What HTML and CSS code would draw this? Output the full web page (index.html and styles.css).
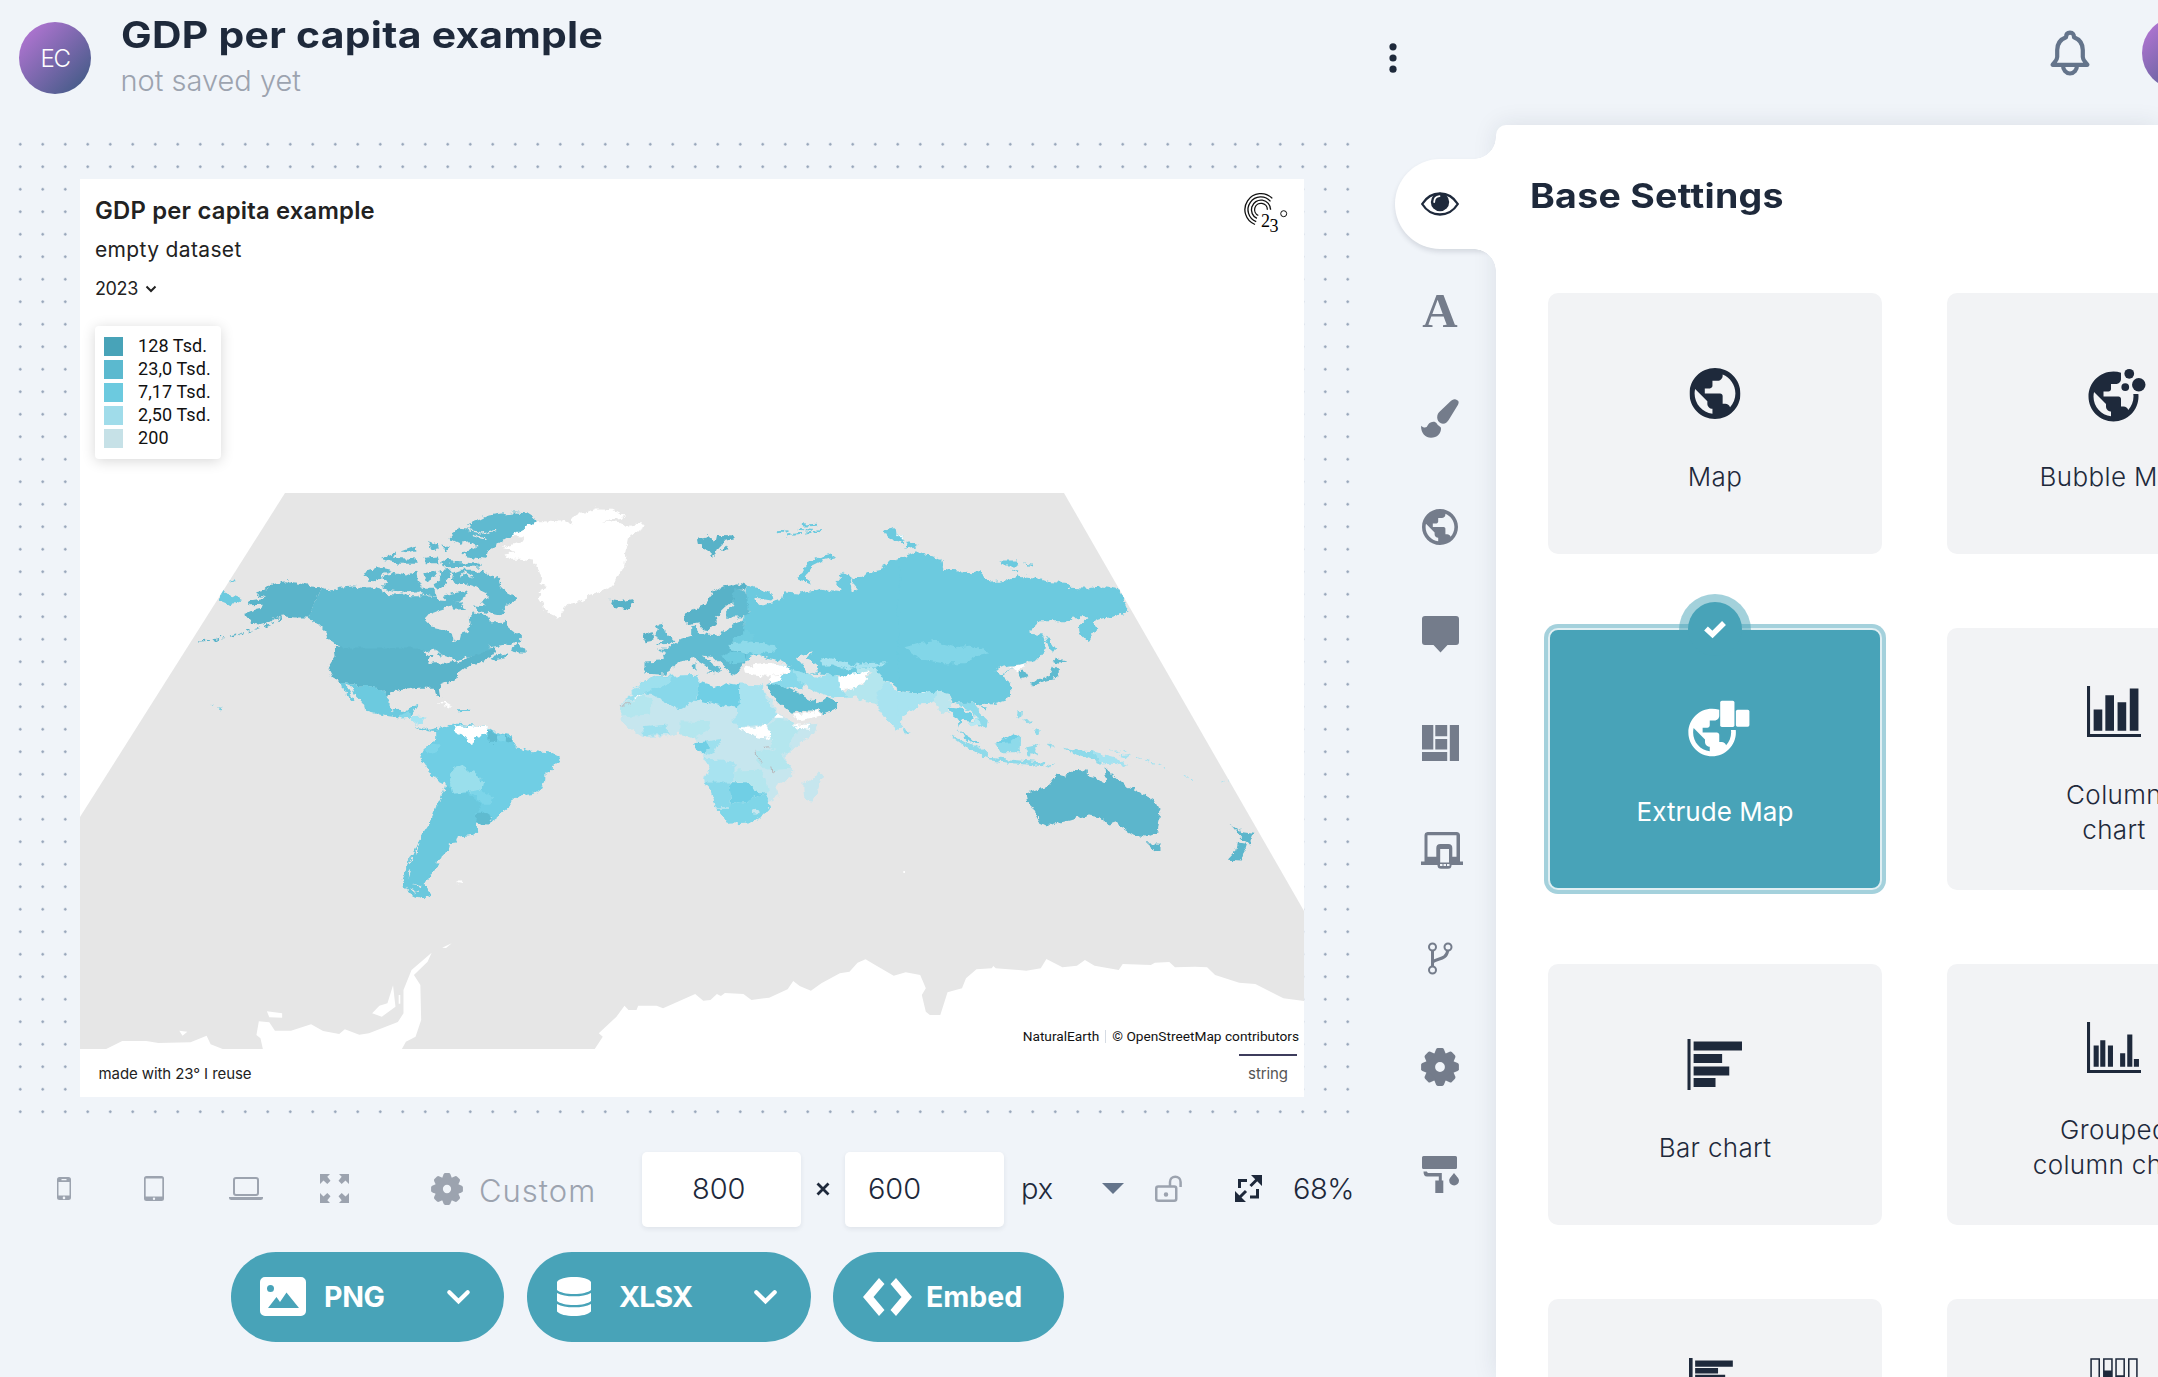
FILE: index.html
```html
<!DOCTYPE html>
<html lang="en">
<head>
<meta charset="utf-8">
<title>GDP per capita example</title>
<link rel="stylesheet" href="styles.css">
</head>
<body>
<svg width="0" height="0" class="defs">
  <defs>
    <symbol id="gear" viewBox="-19 -19 38 38">
      <circle r="9.6" fill="none" stroke="currentColor" stroke-width="9.4"/>
      <g fill="currentColor">
        <path id="tooth" d="M-6.2-12L-4-17.6Q-3.4-18.9-2.2-18.9H2.2Q3.4-18.9 4-17.6L6.2-12Z"/>
        <use href="#tooth" transform="rotate(45)"/><use href="#tooth" transform="rotate(90)"/><use href="#tooth" transform="rotate(135)"/><use href="#tooth" transform="rotate(180)"/><use href="#tooth" transform="rotate(225)"/><use href="#tooth" transform="rotate(270)"/><use href="#tooth" transform="rotate(315)"/>
      </g>
    </symbol>
    <symbol id="globe" viewBox="2 2 20 20"><path fill="currentColor" d="M12 2C6.48 2 2 6.48 2 12s4.48 10 10 10 10-4.48 10-10S17.52 2 12 2zm-1 17.93c-3.95-.49-7-3.85-7-7.93 0-.62.08-1.21.21-1.79L9 15v1c0 1.1.9 2 2 2v1.93zm6.9-2.54c-.26-.81-1-1.39-1.9-1.39h-1v-3c0-.55-.45-1-1-1H8v-2h2c.55 0 1-.45 1-1V7h2c1.1 0 2-.9 2-2v-.41c2.93 1.19 5 4.06 5 7.41 0 2.08-.8 3.97-2.1 5.39z"/></symbol>
    <path id="cutglobe" fill="currentColor" d="M18.92 12c.04.33.08.66.08 1 0 2.08-.8 3.97-2.1 5.39-.26-.81-1-1.39-1.9-1.39h-1v-3c0-.55-.45-1-1-1H7v-2h2c.55 0 1-.45 1-1V8h2c1.1 0 2-.9 2-2V3.46c-.95-.3-1.95-.46-3-.46C5.48 3 1 7.48 1 13s4.48 10 10 10 10-4.48 10-10c0-.34-.02-.67-.05-1h-2.03zM10 20.93c-3.95-.49-7-3.85-7-7.93 0-.62.08-1.21.21-1.79L8 16v1c0 1.1.9 2 2 2v1.93z"/>
    <filter id="coast" x="0" y="0" width="100%" height="100%">
      <feTurbulence type="fractalNoise" baseFrequency="0.16" numOctaves="3" seed="4"/>
      <feDisplacementMap in="SourceGraphic" scale="7" xChannelSelector="R" yChannelSelector="G"/>
    </filter>
  </defs>
</svg>

<header class="topbar">
  <div class="avatar avatar-project"><span>EC</span></div>
  <div class="heading">
    <h1><span class="t-title">GDP per capita example</span></h1>
    <p><span class="t-sub">not saved yet</span></p>
  </div>
  <svg class="more" width="28" height="32" viewBox="0 0 28 32"><g fill="#1e293b"><circle cx="14" cy="4.8" r="3.6"/><circle cx="14" cy="16" r="3.6"/><circle cx="14" cy="27.2" r="3.6"/></g></svg>
  <svg class="bell" width="40" height="46" viewBox="0 0 40 46" fill="none" stroke="#64748b" stroke-width="4.2" stroke-linejoin="round"><path d="M20 2.6c-3 0-4 2-4 4.600C10 9.500 7.200 14 7.200 20v7c0 3.500-2.500 5-4.600 7.800h34.800C35.300 32 32.800 30.500 32.800 27v-7c0-6-2.800-10.500-8.800-12.800 0-2.600-1-4.600-4-4.600z"/><path d="M13 35.500a7 8 0 0 0 14 0"/></svg>
  <div class="avatar avatar-user"></div>
</header>

<main class="workspace">
  <section class="editor">
    <div class="stage">
      <article class="chart">
        <div class="chart-head">
          <div>
            <h2><span class="t-chart">GDP per capita example</span></h2>
            <p class="chart-sub">empty dataset</p>
            <p class="chart-year"><span class="t-year">2023</span><svg width="12" height="8" viewBox="0 0 12 8"><path d="M1.500 1.500L6 6l4.500-4.500" fill="none" stroke="#222" stroke-width="2"/></svg></p>
          </div>
          <svg class="brand" width="44" height="42" viewBox="0 0 44 42">
            <g fill="none" stroke="#111" stroke-width="1.300"><path d="M28.300 6.400A16 16 0 1 0 11 32.500"/><path d="M26.500 9.300A12.800 12.800 0 1 0 12.200 29.600"/><path d="M26.600 17.700A9.600 9.600 0 1 0 12.900 26.400"/><path d="M23.400 17.700A6.400 6.400 0 1 0 14.300 23.500"/><circle cx="39.700" cy="21.700" r="3" stroke-width="1"/></g>
            <text x="17" y="34.500" font-family="Liberation Serif" font-size="18">2</text><text x="25.500" y="39.500" font-family="Liberation Serif" font-size="18">3</text>
          </svg>
        </div>
        <ul class="legend">
          <li><i class="c1"></i><span>128 Tsd.</span></li>
          <li><i class="c2"></i><span>23,0 Tsd.</span></li>
          <li><i class="c3"></i><span>7,17 Tsd.</span></li>
          <li><i class="c4"></i><span>2,50 Tsd.</span></li>
          <li><i class="c5"></i><span>200</span></li>
        </ul>
        <svg class="map" width="1224" height="556" viewBox="80 493 1224 556">
          <defs><clipPath id="world"><path d="M285 493H1064L1304 911V1049H80V817Z"/></clipPath></defs>
          <path d="M285 493H1064L1304 911V1049H80V817Z" fill="#e6e6e6"/>
          <g clip-path="url(#world)">
          <g transform="translate(70 860) scale(.8036 .3333)" fill="#fff">
            <path d="M45 567L65 543 95 543 110 549 150 547 170 527 175 553 190 567 240 567 237 535 232 525 235 484 248 487 255 512 275 512 300 493 315 513 335 522 342 508 360 524 372 520 408 486 415 460 415 390 425 330 450 278 445 305 428 345 436 375 437 480 430 530 418 545 413 567Z"/>
            <path d="M376 460L385 437 395 430 402 376 405 440 388 470ZM245 454L264 460 264 473 248 472ZM136 512L146 515 140 527ZM463 263L475 250 468 264ZM480 65L488 62 488 68ZM409 405h2v26h-2zM1037 33h2v6h-2z"/>
            <path d="M653 567L663 530 658 520 668 497 680 470 690 437 695 450 705 450 707 437 730 437 738 445 778 402 788 422 797 420 805 402 810 408 815 399 838 402 848 420 870 413 893 388 900 363 908 378 922 392 935 370 958 340 970 335 980 308 990 298 1002 315 1025 347 1040 337 1058 345 1065 385 1060 405 1065 455 1070 465 1083 465 1092 397 1110 385 1115 355 1128 328 1147 325 1149 318 1152 325 1190 332 1208 325 1215 297 1235 322 1253 317 1263 300 1275 317 1305 330 1310 312 1345 315 1350 308 1368 306 1375 322 1400 320 1415 322 1425 345 1455 368 1475 372 1510 415 1540 424 1540 567Z"/>
          </g>
          <g filter="url(#coast)">
          <rect x="80" y="493" width="1224" height="556" fill="none"/>
          <g transform="translate(179.500 480.500) scale(.33333)">
            <path fill="#fff" d="M1060 122L1090 122 1135 125 1150 118 1180 132 1175 112 1200 97 1225 95 1250 84 1300 85 1337 105 1330 115 1270 122 1325 128 1340 145 1370 130 1394 133 1390 145 1350 165 1338 225 1335 250 1325 275 1312 290 1300 318 1260 335 1230 345 1200 362 1170 367 1155 385 1135 413 1115 400 1095 390 1090 370 1078 350 1083 330 1102 320 1080 312 1085 290 1075 260 1060 240 1025 235 985 235 975 222 1012 215 967 202 1030 182 1030 168 995 166 1030 145Z"/>
            <path fill="#5ab4ca" d="M320 302L340 308 360 310 395 318 428 321 384 411 345 411 315 408 290 412 265 425 240 432 213 428 216 416 197 414 195 403 212 392 245 385 250 373 210 374 207 366 212 360 260 352 242 346 229 340 233 332 252 328 265 318 290 308Z"/>
            <path fill="none" stroke="#5ab4ca" stroke-width="4" stroke-dasharray="22 7 9 12" d="M53 481L100 479 140 470 180 459 215 451 250 440 290 422 310 412"/>
            <path fill="#5fbad0" d="M428 321L455 330 480 322 520 318 545 322 575 320 605 328 610 340 650 342 670 338 690 344 735 344 770 346 780 360 810 362 815 378 770 392 745 402 737 420 755 438 800 448 820 460 825 480 840 482 845 460 865 452 870 430 868 410 880 396 905 400 925 408 935 425 965 425 975 418 990 445 1010 460 1028 470 1015 485 990 493 960 498 935 510 910 520 870 530 840 538 800 540 785 528 770 512 740 512 710 503 483 503 450 480 440 455 415 430 384 411Z"/>
            <path fill="#5fbad0" d="M880 268L915 272 925 285 950 292 965 305 960 318 985 340 1010 352 1000 368 978 370 980 390 960 398 925 385 905 365 925 350 920 335 890 320 865 312 830 315 820 295 825 275 845 268ZM1068 116L1040 98 1005 96 960 100 925 105 900 118 865 130 875 145 840 142 812 160 815 178 840 190 870 185 890 200 865 215 845 218 860 228 920 235 925 210 955 190 985 172 1020 152 1050 135ZM555 290L570 268 600 260 635 268 610 282 600 290 585 302 565 300ZM605 290L640 276 680 285 710 270 715 300 730 330 690 335 640 330 610 325 608 312 625 305ZM602 235L650 216 640 232 690 235 710 230 715 250 660 250ZM665 212L705 198 708 210 680 215ZM745 182L775 190 778 205 755 205ZM735 232L775 228 780 248 740 248ZM785 240L900 250 905 258 790 260ZM735 275L765 268 770 285 745 300 730 290ZM780 270L810 265 820 275 800 300 790 320 770 325 765 310 785 300ZM700 325L765 325 768 345 720 338ZM785 195L808 200 800 212ZM785 345L840 335 865 330 850 360 810 372ZM815 370L835 365 860 385 825 388ZM880 375L930 378 975 395 960 405 900 392ZM990 510L1015 488 1022 500 1040 505 1042 517 1010 515ZM945 525L985 518 980 530 935 538Z"/>
            <path fill="none" stroke="#e6e6e6" stroke-width="4" d="M868 150L910 158 950 150M880 165L915 175M845 200L900 195M840 290L855 275 880 290"/>
            <path fill="#5ab4ca" d="M463 501L710 501 740 512 760 520 745 550 770 548 790 550 835 542 870 530 920 512 952 500 945 520 895 550 860 560 835 580 835 592 780 615 785 650 770 648 765 622 720 622 655 630 635 632 628 648 605 628 575 615 540 616 487 606 460 590 445 562 465 530Z"/>
            <path fill="#e6e6e6" d="M730 516L765 506 790 518 770 522 762 548 750 550 757 524ZM788 522L815 530 818 540 792 550ZM838 538L860 528 862 533 840 542ZM925 503L985 490 980 498 950 502Z"/>
            <path fill="#6ccadf" d="M487 606L540 616 575 614 605 628 628 648 627 675 640 692 685 690 695 678 717 673 705 690 690 712 665 712 620 706 560 690 555 672 530 645 515 618 500 612 525 660 520 664 490 628ZM118 350L133 330 140 340 160 345 187 355 165 365 155 377 140 368 120 360ZM148 300h18v5h-18zM708 735L735 740 750 748 775 742 775 755 745 752ZM835 686L870 685 868 691 838 692ZM90 670l12 2-2 4zM116 680l10 2-4 5z"/>
            <path fill="#84d7e9" d="M655 705L685 695 695 712 665 714Z"/><path fill="#a4e4f2" d="M690 710L738 708 730 725 715 733Z"/>
            <path fill="#fff" d="M772 665L800 668 820 680 800 676ZM832 1203h18v5h-18z"/>
            <path fill="#6fcee4" d="M770 755L780 745 820 730 838 730 925 740 950 755 995 765 1005 785 1010 800 1060 812 1110 815 1138 828 1140 842 1120 865 1098 878 1097 900 1085 925 1065 940 1020 945 995 960 985 985 960 1005 937 1020 930 1030 905 1033 890 1028 893 1052 880 1063 835 1068 830 1085 808 1088 805 1108 790 1120 785 1135 768 1142 770 1155 780 1155 760 1170 750 1187 738 1200 735 1215 740 1230 760 1245 735 1255 700 1245 680 1225 670 1200 678 1170 690 1140 705 1110 715 1085 735 1050 755 1020 770 980 785 955 797 910 755 888 740 855 722 830 735 805 755 790 770 775Z"/>
            <path fill="#6ac8dd" d="M800 908L818 940 865 938 905 972 890 1000 890 1028 893 1052 880 1063 835 1068 830 1085 808 1088 805 1108 790 1120 785 1135 768 1142 780 1155 760 1170 750 1187 738 1200 735 1215 740 1230 760 1245 735 1255 700 1245 680 1225 670 1200 678 1170 690 1140 715 1085 755 1020 785 955Z"/>
            <path fill="none" stroke="#e6e6e6" stroke-width="4" d="M718 1090L708 1120M700 1130L690 1150M690 1170L684 1190M700 1212L725 1216M690 1225L715 1236"/>
            <path fill="#5fbbd0" d="M925 748L950 757 950 787 928 787ZM977 763L1000 775 990 783 975 780ZM893 997L912 997 940 1015 925 1032 890 1028Z"/>
            <path fill="#7dd5e9" d="M735 805L755 792 780 795 778 810 740 822ZM950 765L977 763 975 782 950 782ZM865 930L885 918 910 932 938 950 932 970 905 970 895 950Z"/>
            <path fill="#9adfec" d="M812 885L825 862 855 855 865 872 895 880 900 900 917 905 912 925 865 935 818 940 812 915Z"/>
            <path fill="#fff" d="M820 738L850 735 885 737 928 740 920 765 885 770 882 787 860 787 862 767 825 755Z"/>
          </g>
          <g transform="translate(599.500 480.500) scale(.33333)">
            <path fill="#6ccadf" d="M442 315L470 322 510 335 525 350 515 360 470 352 460 355 490 375 520 365 545 355 550 335 600 340 665 325 720 332 730 330 708 305 735 275 750 285 760 330 775 325 755 300 790 290 805 275 845 268 850 252 900 235 935 232 945 212 985 225 1025 235 1030 250 1020 268 1085 270 1085 640 1050 632 1010 638 965 638 930 632 900 625 880 610 840 590 820 570 740 590 690 585 650 580 575 578 520 550 440 540 430 415 450 395 440 360ZM595 297L605 275 625 245 655 232 695 222 708 230 670 240 640 255 620 280 625 300 635 308 610 303ZM855 150L880 145 915 175 912 188 870 175ZM920 205L925 182 958 195Z"/>
            <path fill="none" stroke="#6ccadf" stroke-width="6" stroke-dasharray="16 5 24 8" d="M532 155L570 152 M560 165L605 160 M595 145L640 148 M610 135L650 133 M620 160L670 150"/>
            <path fill="#60bbd1" d="M380 450L400 430 430 420 440 480 440 540 430 555 400 590 385 570 365 550 345 530 310 525 345 555 365 565 345 578 320 575 340 570 300 545 285 530 265 538 235 545 225 560 205 575 190 582 135 580 135 543 185 540 200 520 172 507 200 508 245 475 275 465 275 440 290 438 295 460 350 465ZM165 435L190 430 200 455 222 478 215 490 170 492 190 478 165 465 175 450ZM280 548h8v20h-8zM375 345L400 320 440 330 450 400 435 410 380 412 380 395 405 372Z"/>
            <path fill="#58b2c8" d="M252 400L280 388 310 375 335 340 370 318 410 308 442 315 440 325 405 325 400 360 375 380 350 405 355 425 340 440 330 452 315 450 300 425 258 432ZM130 465L160 455 165 480 135 485ZM30 358L60 362 100 356 110 370 75 385 45 380ZM295 175L330 170 345 185 350 163 405 165 400 180 370 185 355 200 345 220 335 228 320 208 298 190ZM365 210L380 195 390 210Z"/>
            <path fill="#70cce0" d="M400 475L435 450 465 465 460 485 400 490ZM365 530L392 512 435 515 440 545 400 548Z"/>
            <path fill="#8edaea" d="M395 490L440 482 480 485 530 500 525 515 480 522 460 520 430 515 390 505Z"/>
            <path fill="#e6e6e6" d="M436 558L450 530 475 522 500 530 540 540 572 557 500 550ZM590 530L640 515 625 535 652 555 655 575 620 580 610 555Z"/>
            <path fill="#fff" d="M436 562L470 553 500 550 560 556 577 577 520 583 500 586 440 580Z"/>
            <path fill="#c6e6ee" d="M165 588L250 583 298 585 298 605 345 620 385 608 420 612 490 615 500 640 515 660 530 690 565 715 580 735 655 730 645 755 600 790 560 825 560 845 578 865 578 890 530 915 537 945 505 965 513 975 490 1005 455 1025 385 1030 370 1005 350 980 335 935 310 900 328 865 312 830 300 815 283 800 288 780 270 765 235 760 200 768 135 770 95 745 60 720 65 680 60 670 85 650 125 605 160 590ZM612 905L645 890 658 872 668 885 655 930 640 960 615 955 612 930Z"/>
            <path fill="#88d8ea" d="M165 588L298 583 290 660 240 687 155 640 130 640 100 650 125 605ZM500 610L552 582 580 570 615 600 615 628 560 620ZM312 905L390 905 395 980 350 980 335 935Z"/>
            <path fill="#9de0ee" d="M165 588L215 588 212 608 130 640 75 668 125 605ZM580 568L610 575 655 590 700 580 720 595 722 620 745 648 700 650 640 630 600 605ZM325 783L365 775 350 810 315 825ZM130 740L205 732 205 762 135 768Z"/>
            <path fill="#70cfe5" d="M295 607L345 620 385 608 420 615 418 682 370 675 310 662 292 655ZM285 785L325 783 332 800 308 820 285 805ZM390 908L440 908 495 937 440 965 395 970Z"/>
            <path fill="#a8e3f0" d="M420 612L490 615 508 670 535 700 500 730 420 740 398 715 415 700ZM318 835L370 838 405 845 405 905 312 905 328 865ZM665 530L690 535 735 545 770 560 745 568 700 552 668 552ZM765 550L865 545 830 560 770 562ZM845 595L865 605 890 630 960 642 1010 640 1015 655 990 670 960 672 905 710 905 735 890 748 860 720 840 690 830 670 830 640ZM910 740L930 755 920 762 910 755Z"/>
            <path fill="#b4e6ee" d="M65 680L130 640 155 650 155 705 65 710ZM505 735L535 712 570 720 600 750 575 775 570 815 555 825 515 800ZM240 722L335 725 330 745 285 775 240 758ZM405 870L480 868 500 890 508 935 480 935 445 908 408 905ZM745 630L790 610 800 590 830 568 860 600 850 620 830 640 830 670 800 665 770 648 735 650ZM775 562L835 562 820 580 775 575ZM470 810L540 810 560 845 575 865 500 870 470 840Z"/>
            <path fill="#7fd6e8" d="M395 970L440 965 495 937 503 960 513 975 490 1005 455 1025 385 1030 355 985 390 985Z"/>
            <ellipse fill="#c6e6ee" cx="470" cy="992" rx="10" ry="7"/>
            <path fill="#5dbbd0" d="M500 615L520 612 555 618 600 640 650 665 670 660 685 648 718 668 700 690 670 700 660 690 620 690 580 700 545 670 515 640Z"/>
            <path fill="#fff" d="M513 585L552 582 545 600 515 608ZM716 593L760 580 803 573 802 597 770 622 722 630ZM585 702L620 698 655 688 665 705 590 722ZM418 740L470 742 495 730 517 765 500 775 463 768ZM525 712L535 695 555 712ZM580 732L635 733 630 748 600 745ZM88 668L108 645 130 640 100 655ZM890 155L915 175 912 180ZM990 278L1020 265 1015 275Z"/>
            <path fill="none" stroke="#b8b4b8" stroke-width="3" d="M470 808q-2 20 18 38M517 855l4 24M488 801l22-2M60 673h32"/>
          </g>
          <g transform="translate(899.500 500.500) scale(.33333)">
            <path fill="#6ccadf" d="M0 175L50 155 100 168 130 180 130 205 210 215 240 212 262 235 285 245 345 235 350 225 410 232 450 245 495 247 515 262 560 265 600 258 655 265 680 310 690 333 635 350 605 355 580 362 590 385 565 425 540 395 538 375 570 350 520 350 510 362 420 362 385 398 430 405 437 425 435 450 410 478 350 495 310 522 335 560 335 575 325 595 280 608 240 615 225 605 160 610 145 580 60 578 -5 568ZM437 402L455 425 470 445 460 460 440 425ZM300 180L355 180 350 195 305 195ZM370 185L400 190 398 195ZM335 208L360 210 355 215ZM245 620L262 620 255 630Z"/>
            <path fill="#82d6e8" d="M15 440L60 428 100 422 130 430 170 440 215 435 275 455 230 465 195 488 130 488 60 475Z"/>
            <path fill="#e6e6e6" d="M283 510L310 498 360 492 320 512 300 522Z"/>
            <path fill="#fff" d="M335 500L375 488 355 512ZM66 575h16v6h-16z"/>
            <path fill="#5fbbd0" d="M357 515L375 512 387 530 362 537ZM463 495L478 510 480 530 440 540 400 555 395 545 450 525ZM455 485L470 472 500 480 480 490Z"/>
            <path fill="#a8e3f0" d="M-5 570L60 578 115 572 105 605 60 612 -5 645Z"/>
            <path fill="#bce6ee" d="M105 600L115 570 145 580 155 610 150 640 125 640Z"/>
            <path fill="#8edaea" d="M165 610L225 605 235 630 265 660 262 675 235 685 215 660 240 655 210 630ZM152 705L185 715 265 755 265 770 215 750ZM265 772L340 778 435 787 430 797 340 788 270 780ZM285 730L320 722 345 697 362 705 360 755 310 755 290 745ZM382 740L420 732 400 742 415 765 400 758 388 768ZM350 632L368 635 360 655 350 650ZM370 655L400 665 390 672ZM400 685L425 690 410 698ZM440 795L470 788 450 798ZM450 725L460 735 455 745ZM490 742L540 750 580 752 605 790 560 770 520 758ZM10 685L30 695 20 700Z"/>
            <path fill="#b8e8f2" d="M205 665L240 655 245 675 225 678Z"/>
            <path fill="#70cfe5" d="M150 622L180 625 225 645 215 660 185 658 175 690 240 728 215 725 178 692 175 660ZM290 728L345 697 360 705 335 725Z"/>
            <path fill="#a4e2f0" d="M580 752L650 772 690 797 640 790 605 792ZM660 768L695 762 680 774Z"/>
            <path fill="none" stroke="#a4e2f0" stroke-width="4" stroke-dasharray="12 9" d="M715 770L800 800M850 827L880 840M630 750L690 755M965 848L985 838"/>
            <path fill="#5cb6cc" d="M380 880L440 860 470 822 500 828 510 808 565 810 565 830 620 845 615 800 670 850 720 875 765 900 782 935 775 995 740 1008 700 1003 670 985 650 965 630 972 600 950 560 945 510 960 440 975 420 965 385 900ZM740 1028L780 1030 780 1050 765 1052ZM990 970L1030 995 1062 1000 1050 1032 1035 1020ZM1015 1025L1040 1030 1025 1080 985 1078 1010 1050Z"/>
          </g>
          </g>
          </g>
        </svg>
        <div class="attribution"><span>NaturalEarth</span><i></i><span>© OpenStreetMap contributors</span></div>
        <div class="chart-foot"><span class="t-made">made with 23° I reuse</span><span class="source">string</span></div>
      </article>
    </div>

    <div class="sizes">
      <svg class="s-phone" width="14" height="23" viewBox="0 0 14 23"><path fill="currentColor" fill-rule="evenodd" d="M2.500 0h9A2.500 2.500 0 0 1 14 2.500v18a2.500 2.500 0 0 1-2.500 2.500h-9A2.500 2.500 0 0 1 0 20.500v-18A2.500 2.500 0 0 1 2.500 0zM1.500 5v13.500h11V5zM4.500 2v1.300h5V2zM7 19.600a1.300 1.300 0 1 0 0 2.600 1.300 1.300 0 0 0 0-2.600z"/></svg>
      <svg class="s-tablet" width="20" height="25" viewBox="0 0 20 25"><path fill="currentColor" fill-rule="evenodd" d="M2.500 0h15A2.500 2.500 0 0 1 20 2.500v20a2.500 2.500 0 0 1-2.500 2.500h-15A2.500 2.500 0 0 1 0 22.500v-20A2.500 2.500 0 0 1 2.500 0zM1.700 2.500v18h16.600v-18zM10 21.500a1.200 1.200 0 1 0 0 2.400 1.200 1.200 0 0 0 0-2.400z"/></svg>
      <svg class="s-laptop" width="34" height="23" viewBox="0 0 34 23"><rect x="5" y="1" width="24" height="17" rx="2" fill="none" stroke="currentColor" stroke-width="2"/><path fill="currentColor" d="M0 20h34v.5a2.500 2.500 0 0 1-2.500 2.500h-29A2.500 2.500 0 0 1 0 20.500z"/></svg>
      <svg class="s-full" width="29" height="29" viewBox="0 0 29 29" fill="currentColor"><path id="ar" d="M0 0h10L7.300 2.700l3.200 4L7.300 10 3.500 6.500 0 10z"/><use href="#ar" transform="matrix(-1 0 0 1 29 0)"/><use href="#ar" transform="matrix(1 0 0 -1 0 29)"/><use href="#ar" transform="matrix(-1 0 0 -1 29 29)"/></svg>
      <svg class="s-gear" width="32" height="32"><use href="#gear"/></svg>
      <span class="s-custom">Custom</span>
      <span class="field field-w">800</span>
      <svg class="s-times" width="14" height="14" viewBox="0 0 14 14"><path d="M1.500 1.500l11 11m0-11l-11 11" stroke="#1e293b" stroke-width="2.800"/></svg>
      <span class="field field-h">600</span>
      <span class="s-px">px</span>
      <svg class="s-caret" width="22" height="11" viewBox="0 0 22 11"><path d="M0 0h22L11 11z" fill="#64748b"/></svg>
      <svg class="s-lock" width="27" height="27" viewBox="0 0 27 27" fill="none" stroke="currentColor" stroke-width="2.500"><rect x="1.250" y="11.500" width="20" height="14.200" rx="2"/><path d="M15 11V7a5.200 5.200 0 0 1 10.600 0v5"/><circle cx="11" cy="19.500" r="1" fill="currentColor"/></svg>
      <svg class="s-scale" width="27" height="27" viewBox="0 0 27 27" fill="none" stroke="#1e293b" stroke-width="3"><path d="M4.500 13V5.500H12M15 22h7.500v-8M15.500 11l7-7M11 16l-7 7"/><path fill="#1e293b" stroke="none" d="M16 0h11v11zM0 16v11h11z"/></svg>
      <span class="s-zoom">68%</span>
    </div>

    <div class="exports">
      <button class="btn btn-png">
        <svg width="46" height="39" viewBox="0 0 46 39"><path fill="#fff" fill-rule="evenodd" d="M5 0h36a5 5 0 0 1 5 5v29a5 5 0 0 1-5 5H5a5 5 0 0 1-5-5V5a5 5 0 0 1 5-5zM10.500 8a3.500 3.500 0 1 0 0 7 3.500 3.500 0 0 0 0-7zM8 31h31L26.500 15.500 20 25l-3.500-5z"/></svg>
        <span>PNG</span>
        <svg class="chev" width="23" height="14" viewBox="0 0 23 14"><path d="M2.300 2.300l9.200 9 9.200-9" fill="none" stroke="#fff" stroke-width="4.200" stroke-linecap="round"/></svg>
      </button>
      <button class="btn btn-xlsx">
        <svg width="34" height="39" viewBox="0 0 34 39" fill="#fff"><path d="M0 5C2 1.500 9 0 17 0s15 1.500 17 5v8c-3 2.500-9 4-17 4S3 15.500 0 13zM0 16c4 2.500 10 3.300 17 3.300S30 18.500 34 16v8c-3 2.500-9 4-17 4S3 26.500 0 24zM0 27c4 2.500 10 3.300 17 3.300S30 29.500 34 27v7.500C31 37.500 25 39 17 39S3 37.500 0 34.500z"/></svg>
        <span>XLSX</span>
        <svg class="chev" width="23" height="14" viewBox="0 0 23 14"><path d="M2.300 2.300l9.200 9 9.200-9" fill="none" stroke="#fff" stroke-width="4.200" stroke-linecap="round"/></svg>
      </button>
      <button class="btn btn-embed">
        <svg width="49" height="38" viewBox="0 0 49 38"><path fill="#fff" d="M16 0L0 19l16 19 5.500-6L10.500 19l11-13zM33 0l16 19-16 19-5.500-6 11-13-11-13z"/></svg>
        <span>Embed</span>
      </button>
    </div>
  </section>

  <nav class="rail">
    <a class="active"><svg width="38" height="24" viewBox="0 0 38 24"><path d="M1.200 12C10-2 28-2 36.800 12 28 26 10 26 1.200 12z" fill="#fff" stroke="#1e293b" stroke-width="2.300"/><circle cx="19" cy="10" r="9.200" fill="#1e293b"/><path d="M13.200 10c0-3.200 2-5.500 5.300-5.900" fill="none" stroke="#fff" stroke-width="1.800" stroke-linecap="round"/></svg></a>
    <a><span class="glyph-a">A</span></a>
    <a><svg width="38" height="38.700" viewBox="723 838 114 116" fill="currentColor"><path d="M832 842c-8-6-15-2-22 4l-33 32c-10 11-6 34 12 34 8 0 12-4 17-11l28-46c3-6 3-10-2-13z"/><path d="M723 918c0 24 14 36 30 36 18 0 31-12 30-30-3-5-10-6-12-12-5-6-9-6-14-5-11 1-13 9-17 15-5 3-12 1-17-4z"/></svg></a>
    <a><svg width="36" height="36"><use href="#globe"/></svg></a>
    <a><svg width="37" height="37" viewBox="0 0 37 37" fill="currentColor"><path d="M3 0h31A3 3 0 0 1 37 3v23a3 3 0 0 1-3 3H25.500l-7 7.500-7-7.500H3A3 3 0 0 1 0 26V3A3 3 0 0 1 3 0z"/></svg></a>
    <a><svg width="37" height="36" viewBox="0 0 37 36" fill="currentColor"><path d="M0 0h11.300v24.500H0zM13.300 0h11.900v11.300H13.300zM13.300 14h11.900v10.500H13.300zM27.800 0H37v36h-9.200zM0 27h25.200v9H0z"/></svg></a>
    <a class="wide"><svg width="42" height="38" viewBox="0 0 42 38"><path fill="currentColor" fill-rule="evenodd" d="M6.500 0h29A3.500 3.500 0 0 1 39 3.500V29.500h3V33H0v-3.500h3.500v-26A3.500 3.500 0 0 1 6.500 0zM6.500 3.200v21.500h8.800V16a4 4 0 0 1 4-4h8a4 4 0 0 1 4 4v8.700h4.200V3.200z"/><rect x="16.500" y="13.200" width="14" height="23.600" rx="3.500" fill="currentColor"/><rect x="19.200" y="17" width="8.800" height="13.500" fill="#f0f4f9"/><path d="M19 33h2.500m1 0H25m1 0h2.500" stroke="#f0f4f9" stroke-width="1.800"/></svg></a>
    <a><svg width="25" height="33" viewBox="0 0 25 33" fill="none" stroke="currentColor"><g stroke-width="2"><circle cx="4.500" cy="5" r="3.500"/><circle cx="20" cy="5" r="3.500"/><circle cx="4.500" cy="28" r="3.500"/></g><path d="M4.500 8.500v16M4.500 20c5-4 14-2 15.200-11.500" stroke-width="3"/></svg></a>
    <a><svg width="38" height="38"><use href="#gear"/></svg></a>
    <a><svg width="37" height="37" viewBox="0 0 37 37" fill="currentColor"><path d="M1.500 0h32A1.500 1.500 0 0 1 35 1.500v10a1.500 1.500 0 0 1-1.500 1.500h-32A1.500 1.500 0 0 1 0 11.500v-10A1.500 1.500 0 0 1 1.500 0zM1.500 15.500h3.300c.5 1.500 1.200 1.500 2.500 1.500h12.500v7.500h1.500V37h-8V24.500h3.500v-4H5c-2.500 0-3.500-2-3.500-5zM32 17c2 3 5 5 5 7.500a4.900 4.900 0 0 1-9.800 0C27.200 22 30 20 32 17z"/></svg></a>
  </nav>

  <aside class="panel">
    <h2><span class="t-panel">Base Settings</span></h2>
    <div class="types">
      <div class="card"><svg width="51" height="51"><use href="#globe"/></svg><span>Map</span></div>
      <div class="card"><svg class="bubbles" width="60" height="60" viewBox="0 0 24 24" fill="currentColor"><use href="#cutglobe"/><path fill="#f2f3f5" d="M14.300 2h3l3 5v4.500h-6z"/><circle cx="17.300" cy="3.900" r="1.950"/><circle cx="21.100" cy="8.300" r="2.700"/><circle cx="15.700" cy="9.200" r="1.550"/></svg><span>Bubble Map</span></div>
      <div class="card selected">
        <span class="halo"></span>
        <span class="badge"><svg width="24" height="18" viewBox="0 0 24 18"><path d="M3 8.500l6.500 6L21 3" fill="none" stroke="#fff" stroke-width="5.500"/></svg></span>
        <svg class="extrude" width="57" height="57" viewBox="0 0 24 24" fill="currentColor"><use href="#cutglobe"/><rect x="14.400" y="-.3" width="6" height="11" rx=".7"/><rect x="21" y="3.500" width="5.700" height="7.100" rx=".7"/></svg><span>Extrude Map</span></div>
      <div class="card"><svg width="55" height="51" viewBox="1427 243 108 98" preserveAspectRatio="none" fill="currentColor"><path d="M1428 243h6v92h100v6h-106zM1441 288h17v41h-17zM1464 261h17v68h-17zM1488 274h17v55h-17zM1512 248h17v81h-17z"/></svg><span>Column<br>chart</span></div>
      <div class="card"><svg width="55" height="51" viewBox="645 920 108 98" preserveAspectRatio="none" fill="currentColor"><path d="M645 920h6v98h-6zM657 925h95v17h-95zM657 949h56v17h-56zM657 973h70v17h-70zM657 995h43v17h-43z"/></svg><span>Bar chart</span></div>
      <div class="card"><svg width="55" height="51" viewBox="1427 886 108 98" preserveAspectRatio="none" fill="currentColor"><path d="M1428 886h6v92h100v6h-106zM1441 931h10v41h-10zM1454 921h10v51h-10zM1469 931h10v41h-10zM1493 946h10v26h-10zM1507 910h10v62h-10zM1520 957h10v15h-10z"/></svg><span>Grouped<br>column chart</span></div>
      <div class="card cut"><svg width="55" height="51" viewBox="645 1530 108 98" preserveAspectRatio="none" fill="currentColor"><path d="M648 1530h7v98h-7zM660 1535h74v12h-74zM660 1549h45v11h-45zM660 1562h59v12h-59z"/></svg></div>
      <div class="card cut"><svg width="55" height="51" viewBox="1427 1530 108 98" preserveAspectRatio="none" fill="none" stroke="currentColor" stroke-width="3"><path d="M1436 1532h16v80h-16zM1461 1532h16v80h-16zM1485 1532h16v80h-16zM1510 1532h16v80h-16z"/><path fill="currentColor" stroke="none" d="M1461 1554h16v40h-16zM1485 1563h16v40h-16z"/></svg></div>
    </div>
  </aside>
</main>
</body>
</html>
```
FILE: styles.css
```css
* { box-sizing: border-box; }
html { overflow: hidden; }
body { margin: 0; width: 2158px; height: 1377px; overflow: hidden; background: #f0f4f9; font-family: Inter, "Liberation Sans", sans-serif; color: #1e293b; }
h1, h2, p, ul { margin: 0; padding: 0; font-weight: inherit; }
svg { display: block; flex: none; overflow: visible; }
.defs { position: absolute; }

.topbar { display: flex; align-items: flex-start; height: 125px; overflow: hidden; }
.avatar { flex: none; width: 72px; height: 72px; border-radius: 50%; background: linear-gradient(135deg, #b776d6 5%, #3f5a84 95%); color: #fff; font-size: 24px; font-weight: 300; letter-spacing: -1.3px; display: flex; align-items: center; justify-content: center; }
.avatar-project { margin: 22px 29.5px 0 19px; }
.heading { width: 1258px; flex: none; padding-top: 14px; }
.heading h1 { line-height: 43px; font-size: 36.5px; font-weight: 700; }
.t-title, .t-panel { display: inline-block; transform: scaleX(1.12); transform-origin: 0 0; letter-spacing: .25px; }
.heading p { margin-top: 5px; line-height: 38px; font-size: 29px; font-weight: 300; color: #9ca3af; }
.more { margin-top: 42px; }
.bell { margin: 30px 0 0 643px; }
.avatar-user { margin: 17px 0 0 52px; }

.workspace { display: flex; height: 1252px; }
.editor { width: 1359px; flex: none; }
.stage { margin: 8px 0 0 9px; width: 1350px; height: 990px; padding: 46px 0 0 71px; background: radial-gradient(circle, #94a3b8 1px, transparent 1.5px) 0 0 / 22.5px 22.5px; }
.chart { position: relative; width: 1224px; height: 918px; background: #fff; color: #222; display: flex; flex-direction: column; }
.chart-head { display: flex; justify-content: space-between; padding: 13px 16px 0 15px; height: 147px; }
.chart h2 { font-size: 23.8px; font-weight: 600; line-height: 37px; letter-spacing: .22px; }
.chart-sub { font-size: 21px; line-height: 30px; margin-top: 6px; letter-spacing: .35px; }
.chart-year { font-size: 18px; line-height: 26px; margin-top: 11px; display: flex; align-items: center; gap: 7px; letter-spacing: -.36px; }
.legend { list-style: none; width: 126px; height: 133px; margin: 0 0 34px 15px; padding: 11px 0 0 9px; border-radius: 4px; box-shadow: 0 2px 14px rgba(0,0,0,.16); font: 18px/23px Roboto, sans-serif; letter-spacing: .1px; color: #111; }
.legend li { display: flex; align-items: flex-start; height: 23px; white-space: nowrap; }
.legend i { width: 19px; height: 19px; margin-right: 15px; flex: none; }
.legend span { margin-top: -3px; }
.c1 { background: #48a3b8; } .c2 { background: #5bb9cf; } .c3 { background: #6ccadf; } .c4 { background: #a0dcea; } .c5 { background: #c6e1e7; }
.map { overflow: hidden; }
.attribution { position: absolute; right: 5px; bottom: 50px; display: flex; font: 13.7px/20px Roboto, sans-serif; color: #111; }
.attribution i { width: 1px; height: 13px; background: #d5dbe3; margin: 4px 6px; }
.chart-foot { display: flex; justify-content: space-between; height: 48px; padding: 5px 7px 0 18.5px; font-size: 15px; line-height: 40px; letter-spacing: -.09px; }
.source { width: 58px; text-align: center; border-top: 2px solid #3d3c5c; line-height: 36px; color: #555; font-size: 15px; }

.sizes { display: flex; align-items: center; height: 75px; margin-top: 29px; color: #9ca3af; font-weight: 300; }
.sizes svg { margin-top: -2px; }
.s-phone { margin-left: 57px; } .s-tablet { margin-left: 73px; } .s-laptop { margin-left: 65px; }
.s-full { margin-left: 57px; } .s-gear { margin-left: 82px; }
.s-custom { width: 116px; margin-left: 16px; font-size: 31px; padding-top: 2px; white-space: nowrap; letter-spacing: 1px; }
.field { height: 75px; background: #fff; border-radius: 5px; box-shadow: 0 2px 5px rgba(30,41,59,.08); display: flex; align-items: center; flex: none; }
.field-w { width: 159px; margin-left: 47px; padding-left: 50px; }
.field-h { width: 159px; margin-left: 15px; padding-left: 23px; }
.field, .s-px, .s-zoom { font-size: 29px; color: #1e293b; white-space: nowrap; padding-bottom: 3px; letter-spacing: -.1px; }
.s-times { margin-left: 15px; }
.s-px { width: 32px; margin-left: 17px; } .s-caret { margin-left: 49px; } .s-lock { margin-left: 31px; } .s-scale { margin-left: 53px; }
.s-zoom { margin-left: 31px; letter-spacing: -.4px; }

.exports { display: flex; margin: 25px 0 0 231px; }
.btn { flex: none; height: 90px; border: 0; border-radius: 45px; background: #48a3b8; color: #fff; font: 700 28.5px Inter, sans-serif; padding: 0 0 0 29px; display: flex; align-items: center; }
.btn span { padding-bottom: 2px; }
.btn svg { margin-top: -1px; }
.btn-png { width: 273px; } .btn-png span { width: 123px; margin-left: 18px; text-align: left; letter-spacing: -.3px; }
.btn-xlsx { width: 284px; margin-left: 23px; padding-left: 30px; } .btn-xlsx span { width: 135px; margin-left: 28px; text-align: left; letter-spacing: -.8px; }
.btn-embed { width: 231px; margin-left: 22px; padding-left: 30px; } .btn-embed span { margin-left: 14px; }

.rail { width: 137px; flex: none; padding: 25px 0 0 36px; color: #747c8b; }
.rail a { display: flex; align-items: center; justify-content: center; height: 108px; width: 90px; position: relative; }
.rail a.wide { padding-left: 4px; }
.rail a.active { height: 90px; width: 101px; padding-right: 11px; margin: 9px 0 7.700px; background: #fff; border-radius: 45px 0 0 45px; box-shadow: 0 3px 5px rgba(30,41,59,.13); clip-path: inset(-25px 0 -25px -12px); z-index: 2; }
.active::before, .active::after { content: ""; position: absolute; right: 0; width: 22px; height: 22px; }
.active::before { top: -22px; background: radial-gradient(circle at 0 0, transparent 21.500px, #fff 22px); }
.active::after { bottom: -22px; background: radial-gradient(circle at 0 100%, transparent 21.500px, #fff 22px); }
.glyph-a { font: 700 49px/50px "Liberation Serif", serif; }

.panel { width: 662px; flex: none; height: 1252px; overflow: clip; overflow-clip-margin: 30px; background: #fff; border-radius: 10px 0 0 0; box-shadow: 0 0 24px rgba(30,41,59,.1); }
.panel h2 { padding: 50px 0 0 34px; font-size: 33.5px; font-weight: 700; line-height: 42px; }
.t-panel { letter-spacing: .25px; }
.types { display: grid; grid-template-columns: 334px 334px; grid-template-rows: repeat(3, 261.500px) 78px; gap: 74px 65px; margin: 75.500px 0 0 52px; width: 733px; }
.card { position: relative; background: #f2f3f5; border-radius: 10px; display: grid; grid-template-rows: 56px auto; row-gap: 36px; align-content: center; justify-items: center; padding-top: 14px; text-align: center; font-size: 26px; font-weight: 300; line-height: 35px; letter-spacing: .35px; white-space: nowrap; }
.card > svg { margin: auto; transform: translate(-.5px, -1px); }
.card > svg.bubbles { transform: translate(2px, -3px); }
.card > svg.extrude { transform: translate(-1px, -.5px); }
.card.cut { align-content: start; padding-top: 57px; border-radius: 10px 10px 0 0; overflow: hidden; }
.card.selected { background: #48a3b8; color: #fff; font-weight: 400; letter-spacing: .05px; border: 2px solid #e0eff3; box-shadow: 0 0 0 4px #a4d1dc; }
.halo { position: absolute; left: 129px; top: -36px; width: 72px; height: 36px; border-radius: 36px 36px 0 0; background: rgba(72,163,184,.5); }
.badge { position: absolute; left: 138px; top: -28px; width: 54px; height: 54px; border-radius: 50%; background: #48a3b8; display: flex; align-items: center; justify-content: center; }
```
